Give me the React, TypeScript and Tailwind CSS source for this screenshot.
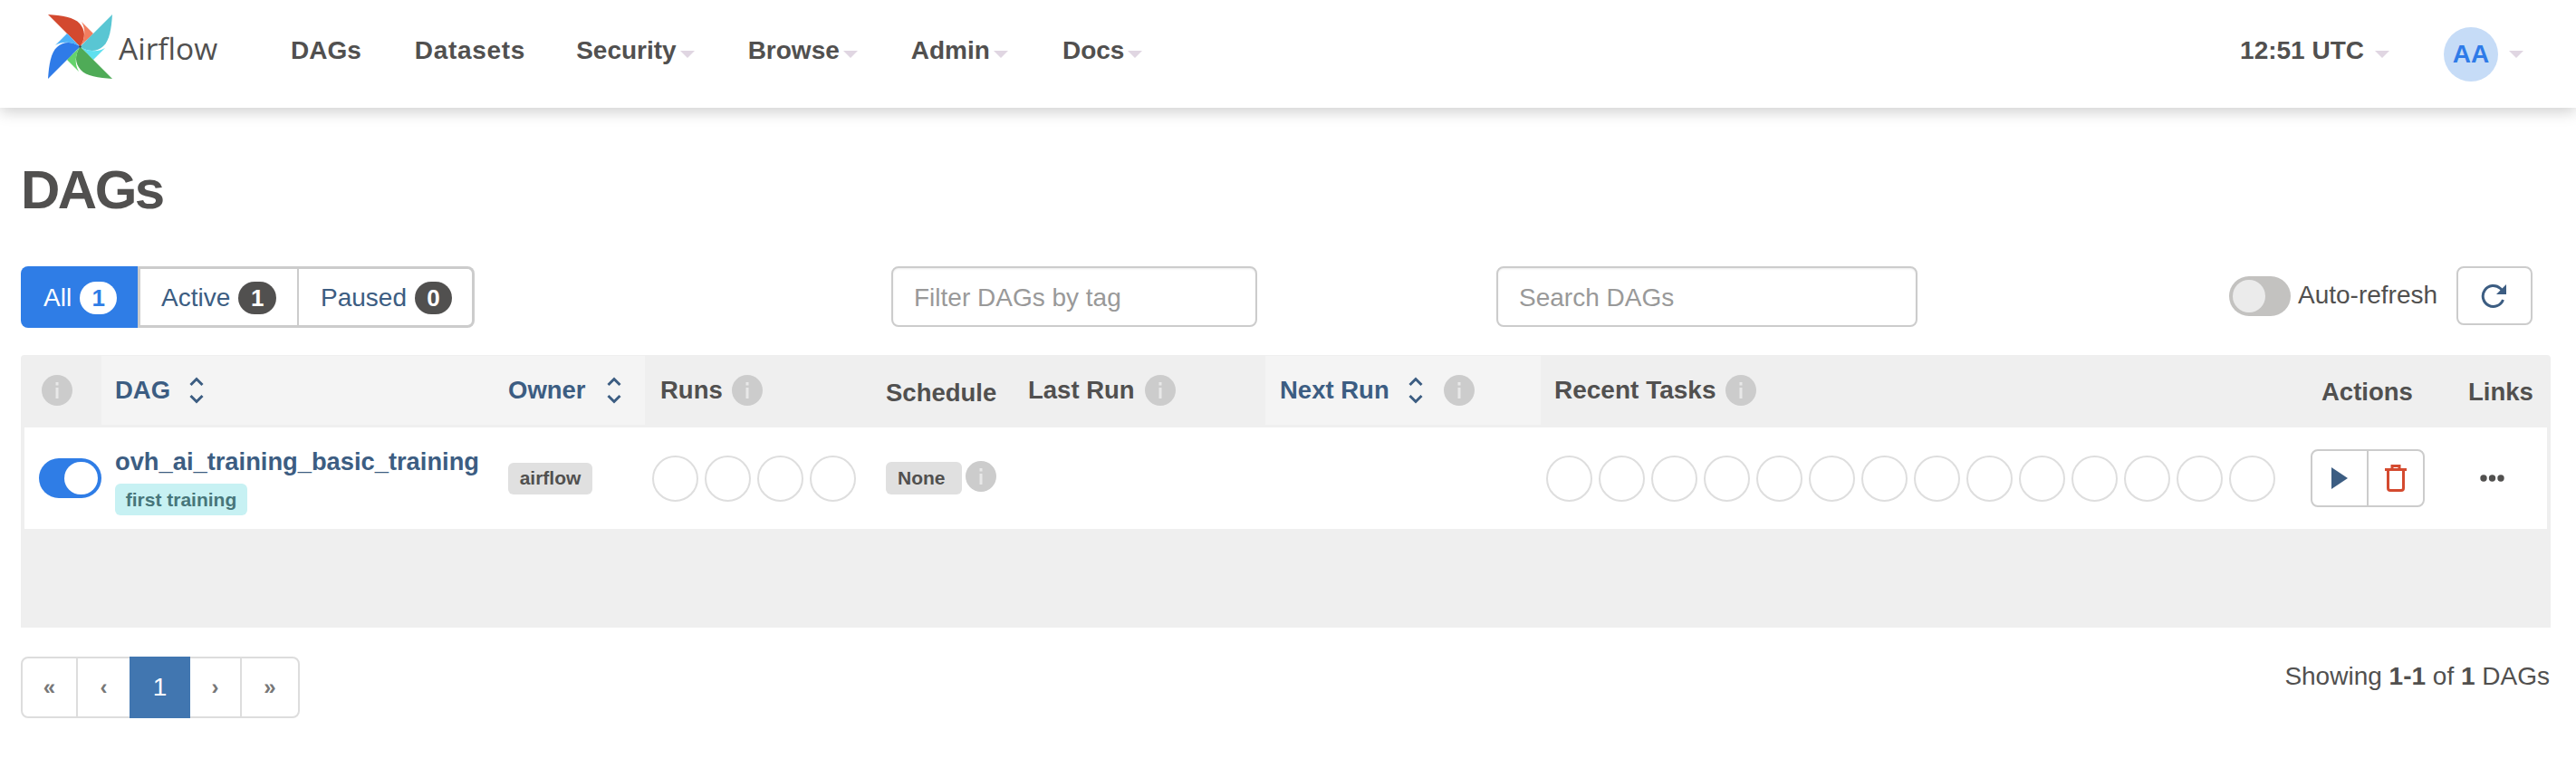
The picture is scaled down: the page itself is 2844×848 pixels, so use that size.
import React from 'react';

const Caret = ({ className = '' }: { className?: string }) => (
  <span className={`inline-block w-0 h-0 border-x-[8px] border-x-transparent border-t-[8px] border-t-[#e0d6e2] ${className}`} />
);

const Info = ({ className = '' }: { className?: string }) => (
  <svg viewBox="0 0 34 34" className={`w-[34px] h-[34px] shrink-0 ${className}`}>
    <circle cx="17" cy="17" r="17" fill="#cccccc" />
    <rect x="15.5" y="8" width="3" height="3.5" fill="#e8e8e8" />
    <rect x="15.5" y="14" width="3" height="12" fill="#e8e8e8" />
  </svg>
);

const Sort = ({ className = '' }: { className?: string }) => (
  <svg viewBox="0 0 18 30" className={`w-[18px] h-[30px] shrink-0 ${className}`}>
    <path d="M2.5 9L9 2.5L15.5 9M2.5 21L9 27.5L15.5 21" fill="none" stroke="#3c5d82" strokeWidth="3" />
  </svg>
);

const Circles = ({ count }: { count: number }) => (
  <div className="flex gap-[7px]">
    {Array.from({ length: count }).map((_, i) => (
      <span key={i} className="block w-[51px] h-[51px] rounded-full border-2 border-[#dedede] bg-white" />
    ))}
  </div>
);

// pinwheel logo, one blade rotated four times
const Blade = ({ angle, main, light }: { angle: number; main: string; light: string }) => (
  <g transform={`rotate(${angle} 35.5 35.5)`}>
    <path d="M0 0C15 1 29 3 35 10C41 17 42 25 35.7 35.7C30 30 24 24 21 21Z" fill={main} />
    <path d="M37 8L50 21C47 25 40 30 35.7 35.7C41 26 42 17 37 8Z" fill={light} />
  </g>
);

const Logo = () => (
  <svg viewBox="0 0 71 71" className="w-[71px] h-[71px] shrink-0 mb-[16px]">
    <Blade angle={0} main="#d3492f" light="#f27e60" />
    <Blade angle={90} main="#59c6d3" light="#5fe0ef" />
    <Blade angle={180} main="#4fab57" light="#65d36c" />
    <Blade angle={270} main="#2f7be8" light="#4fb2f8" />
    <circle cx="35.5" cy="35.5" r="1.2" fill="#444" />
  </svg>
);

const NavItem = ({ label, left, caret, spread }: { label: string; left: string; caret?: boolean; spread?: boolean }) => (
  <div className={`flex items-center ${left}`}>
    <span className={`text-[28px] leading-[34px] font-bold text-[#51504f] mb-[8px] ${spread ? 'tracking-[0.7px]' : ''}`}>{label}</span>
    {caret && <Caret className="ml-[4px]" />}
  </div>
);

const HeaderCell = ({ width, pad, light, children }: { width: string; pad: string; light?: boolean; children: React.ReactNode }) => (
  <div className={`flex items-center h-[76px] text-[27.5px] font-bold ${width} ${pad} ${light ? 'bg-[#f4f4f4] text-[#3c5d82]' : 'text-[#51504f]'}`}>
    {children}
  </div>
);

const PageButton = ({ label, width, border = true }: { label: string; width: string; border?: boolean }) => (
  <div className={`flex items-center justify-center text-[24px] font-bold text-[#777777] ${width} ${border ? 'border-r-2 border-[#dddddd]' : ''}`}>
    {label}
  </div>
);

export default function App() {
  return (
    <div className="w-[2844px] h-[848px] bg-white overflow-hidden font-['Liberation_Sans',Arial,sans-serif] text-[#51504f]">
      {/* Navbar */}
      <header className="h-[119px] flex items-center bg-white shadow-[0_4px_16px_rgba(0,0,0,0.2)] relative pl-[53px]">
        <Logo />
        <span className="ml-[7px] w-[107px] mb-[14px] font-['Open_Sans',sans-serif] text-[33.5px] leading-[40px] text-[#51504f]">Airflow</span>
        <NavItem label="DAGs" left="ml-[83px]" />
        <NavItem label="Datasets" left="ml-[59px]" spread />
        <NavItem label="Security" left="ml-[56px]" caret />
        <NavItem label="Browse" left="ml-[59px]" caret />
        <NavItem label="Admin" left="ml-[59px]" caret />
        <NavItem label="Docs" left="ml-[60px]" caret />
        <div className="ml-auto flex items-center pr-[58px]">
          <span className="text-[28px] leading-[34px] font-bold mb-[8px]">12:51 UTC</span>
          <Caret className="ml-[12px]" />
          <span className="ml-[60px] w-[60px] h-[60px] rounded-full bg-[#c6dcf7] text-[#2f7be8] text-[28px] font-bold flex items-center justify-center">AA</span>
          <Caret className="ml-[12px]" />
        </div>
      </header>

      <main className="px-[23px]">
        <h1 className="mt-[59px] h-[64px] flex items-center text-[60px] leading-[64px] font-bold tracking-[-2.5px] text-[#51504f]">DAGs</h1>

        {/* Toolbar */}
        <div className="mt-[52px] flex items-start h-[68px]">
          <div className="flex w-[501px] h-[68px] text-[28px] text-[#3c5d82] shrink-0">
            <div className="w-[129px] rounded-l-[8px] bg-[#2f7de6] text-white flex items-center pl-[25px] pt-[2px] shrink-0">
              All
              <span className="ml-[9px] w-[41px] h-[36px] rounded-full bg-white text-[#2f7de6] text-[26px] font-bold flex items-center justify-center">1</span>
            </div>
            <div className="w-[178px] border-y-[3px] border-l-[3px] border-r-2 border-[#cccccc] flex items-center pl-[23px] pt-[2px] shrink-0">
              Active
              <span className="ml-[9px] w-[42px] h-[36px] rounded-full bg-[#51504f] text-white text-[26px] font-bold flex items-center justify-center">1</span>
            </div>
            <div className="flex-1 border-y-[3px] border-r-[3px] border-[#cccccc] rounded-r-[8px] flex items-center pl-[24px] pt-[2px]">
              Paused
              <span className="ml-[9px] w-[41px] h-[36px] rounded-full bg-[#51504f] text-white text-[26px] font-bold flex items-center justify-center">0</span>
            </div>
          </div>
          <div className="ml-[460px] w-[404px] h-[67px] border-2 border-[#cccccc] rounded-[8px] flex items-center pl-[23px] pt-[2px] text-[28px] text-[#999999] shrink-0 shadow-[inset_0_1px_2px_rgba(0,0,0,0.08)]">
            Filter DAGs by tag
          </div>
          <div className="ml-[264px] w-[465px] h-[67px] border-2 border-[#cccccc] rounded-[8px] flex items-center pl-[23px] pt-[2px] text-[28px] text-[#999999] shrink-0 shadow-[inset_0_1px_2px_rgba(0,0,0,0.08)]">
            Search DAGs
          </div>
          <div className="ml-[344px] mt-[11px] w-[68px] h-[44px] rounded-full bg-[#c3c2c0] flex items-center pl-[4px] shrink-0">
            <span className="block w-[36px] h-[36px] rounded-full bg-[#ebebeb]" />
          </div>
          <span className="ml-[8px] mt-[15px] text-[28px] leading-[34px] text-[#51504f] shrink-0">Auto-refresh</span>
          <div className="ml-[21px] w-[84px] h-[65px] border-2 border-[#cccccc] rounded-[8px] flex items-center justify-center shrink-0">
            <svg viewBox="0 0 30 30" className="w-[30px] h-[30px]">
              <path d="M24.5 19A11.5 11.5 0 1 1 21.5 6.5L25 10" fill="none" stroke="#3c5d82" strokeWidth="3" />
              <path d="M28 2V13H17Z" fill="#3c5d82" />
            </svg>
          </div>
        </div>

        {/* DAG table */}
        <div className="mt-[30px] w-[2793px] h-[301px] bg-[#efefef] px-[4px] pt-[1px] rounded-t-[4px]">
          <div className="flex">
            <HeaderCell width="w-[85px]" pad="pl-[19px]"><Info /></HeaderCell>
            <HeaderCell width="w-[433px]" pad="pl-[15px]" light>DAG<Sort className="ml-[20px]" /></HeaderCell>
            <HeaderCell width="w-[167px]" pad="pl-[16px]" light>Owner<Sort className="ml-[22px]" /></HeaderCell>
            <HeaderCell width="w-[250px]" pad="pl-[17px]">Runs<Info className="ml-[10px]" /></HeaderCell>
            <HeaderCell width="w-[157px]" pad="pl-[16px] pt-[6px]">Schedule</HeaderCell>
            <HeaderCell width="w-[278px]" pad="pl-[16px]">Last Run<Info className="ml-[11px]" /></HeaderCell>
            <HeaderCell width="w-[304px]" pad="pl-[16px]" light>Next Run<Sort className="ml-[20px]" /><Info className="ml-[22px]" /></HeaderCell>
            <HeaderCell width="w-[834px]" pad="pl-[15px]"><span className="text-[28px]">Recent Tasks</span><Info className="ml-[11px]" /></HeaderCell>
            <HeaderCell width="w-[174px]" pad="pl-[28px] pt-[4px]">Actions</HeaderCell>
            <HeaderCell width="w-[103px]" pad="pl-[16px] pt-[4px]">Links</HeaderCell>
          </div>

          <div className="mt-[3px] h-[112px] flex items-center bg-white">
            <div className="w-[85px] pl-[16px] shrink-0">
              <div className="w-[69px] h-[44px] rounded-full bg-[#2f7de6] flex items-center justify-end pr-[4px]">
                <span className="block w-[37px] h-[36px] rounded-full bg-white" />
              </div>
            </div>
            <div className="w-[433px] h-full pl-[15px] pt-[21px] shrink-0 flex flex-col items-start">
              <span className="text-[27.3px] leading-[34px] font-bold text-[#3c5d82]">ovh_ai_training_basic_training</span>
              <span className="mt-[7px] w-[146px] h-[35px] rounded-[6px] bg-[#c7f1f3] text-[#47767a] text-[21px] font-bold flex items-center justify-center">first training</span>
            </div>
            <div className="w-[167px] pl-[16px] shrink-0">
              <span className="w-[93px] h-[35px] rounded-[6px] bg-[#e0e0e0] text-[21px] font-bold flex items-center justify-center">airflow</span>
            </div>
            <div className="w-[250px] pl-[8px] shrink-0"><Circles count={4} /></div>
            <div className="w-[157px] pl-[16px] shrink-0 flex items-center">
              <span className="w-[84px] h-[36px] rounded-[6px] bg-[#e0e0e0] text-[21px] font-bold flex items-center pl-[13px]">None</span>
              <Info className="ml-[4px] -mt-[4px]" />
            </div>
            <div className="w-[278px] shrink-0" />
            <div className="w-[304px] shrink-0" />
            <div className="w-[834px] pl-[6px] shrink-0"><Circles count={14} /></div>
            <div className="w-[174px] pl-[16px] shrink-0">
              <div className="flex w-[126px] h-[64px] rounded-[8px] border-2 border-[#cccccc]">
                <div className="w-[62px] border-r-2 border-[#cccccc] flex items-center justify-center">
                  <svg viewBox="0 0 18 24" className="w-[18px] h-[24px]"><path d="M0 0L18 12L0 24Z" fill="#3c5d82" /></svg>
                </div>
                <div className="flex-1 flex items-center justify-center">
                  <svg viewBox="0 0 24 30" className="w-[24px] h-[30px]">
                    <path d="M0 5.5H24M8 4V1.5H16V4" fill="none" stroke="#d44a2f" strokeWidth="3" />
                    <path d="M3.5 7V26C3.5 27.5 4.5 28.5 6 28.5H18C19.5 28.5 20.5 27.5 20.5 26V7" fill="none" stroke="#d44a2f" strokeWidth="3" />
                  </svg>
                </div>
              </div>
            </div>
            <div className="w-[103px] pl-[29px] shrink-0">
              <svg viewBox="0 0 27 8" className="w-[27px] h-[8px]">
                <circle cx="4" cy="4" r="3.7" fill="#51504f" />
                <circle cx="13.5" cy="4" r="3.7" fill="#51504f" />
                <circle cx="23" cy="4" r="3.7" fill="#51504f" />
              </svg>
            </div>
          </div>
        </div>

        {/* Pagination */}
        <div className="mt-[32px] flex items-center justify-between">
          <div className="flex w-[308px] h-[68px] rounded-[8px] border-2 border-[#dddddd]">
            <PageButton label="«" width="w-[61px]" />
            <PageButton label="‹" width="w-[57px]" border={false} />
            <div className="-my-[2px] w-[67px] bg-[#4176b0] text-white text-[28px] flex items-center justify-center">1</div>
            <PageButton label="›" width="w-[57px]" />
            <PageButton label="»" width="flex-1" border={false} />
          </div>
          <span className="text-[28px] mr-[6px] -mt-[24px]">
            Showing <b>1-1</b> of <b>1</b> DAGs
          </span>
        </div>
      </main>
    </div>
  );
}
